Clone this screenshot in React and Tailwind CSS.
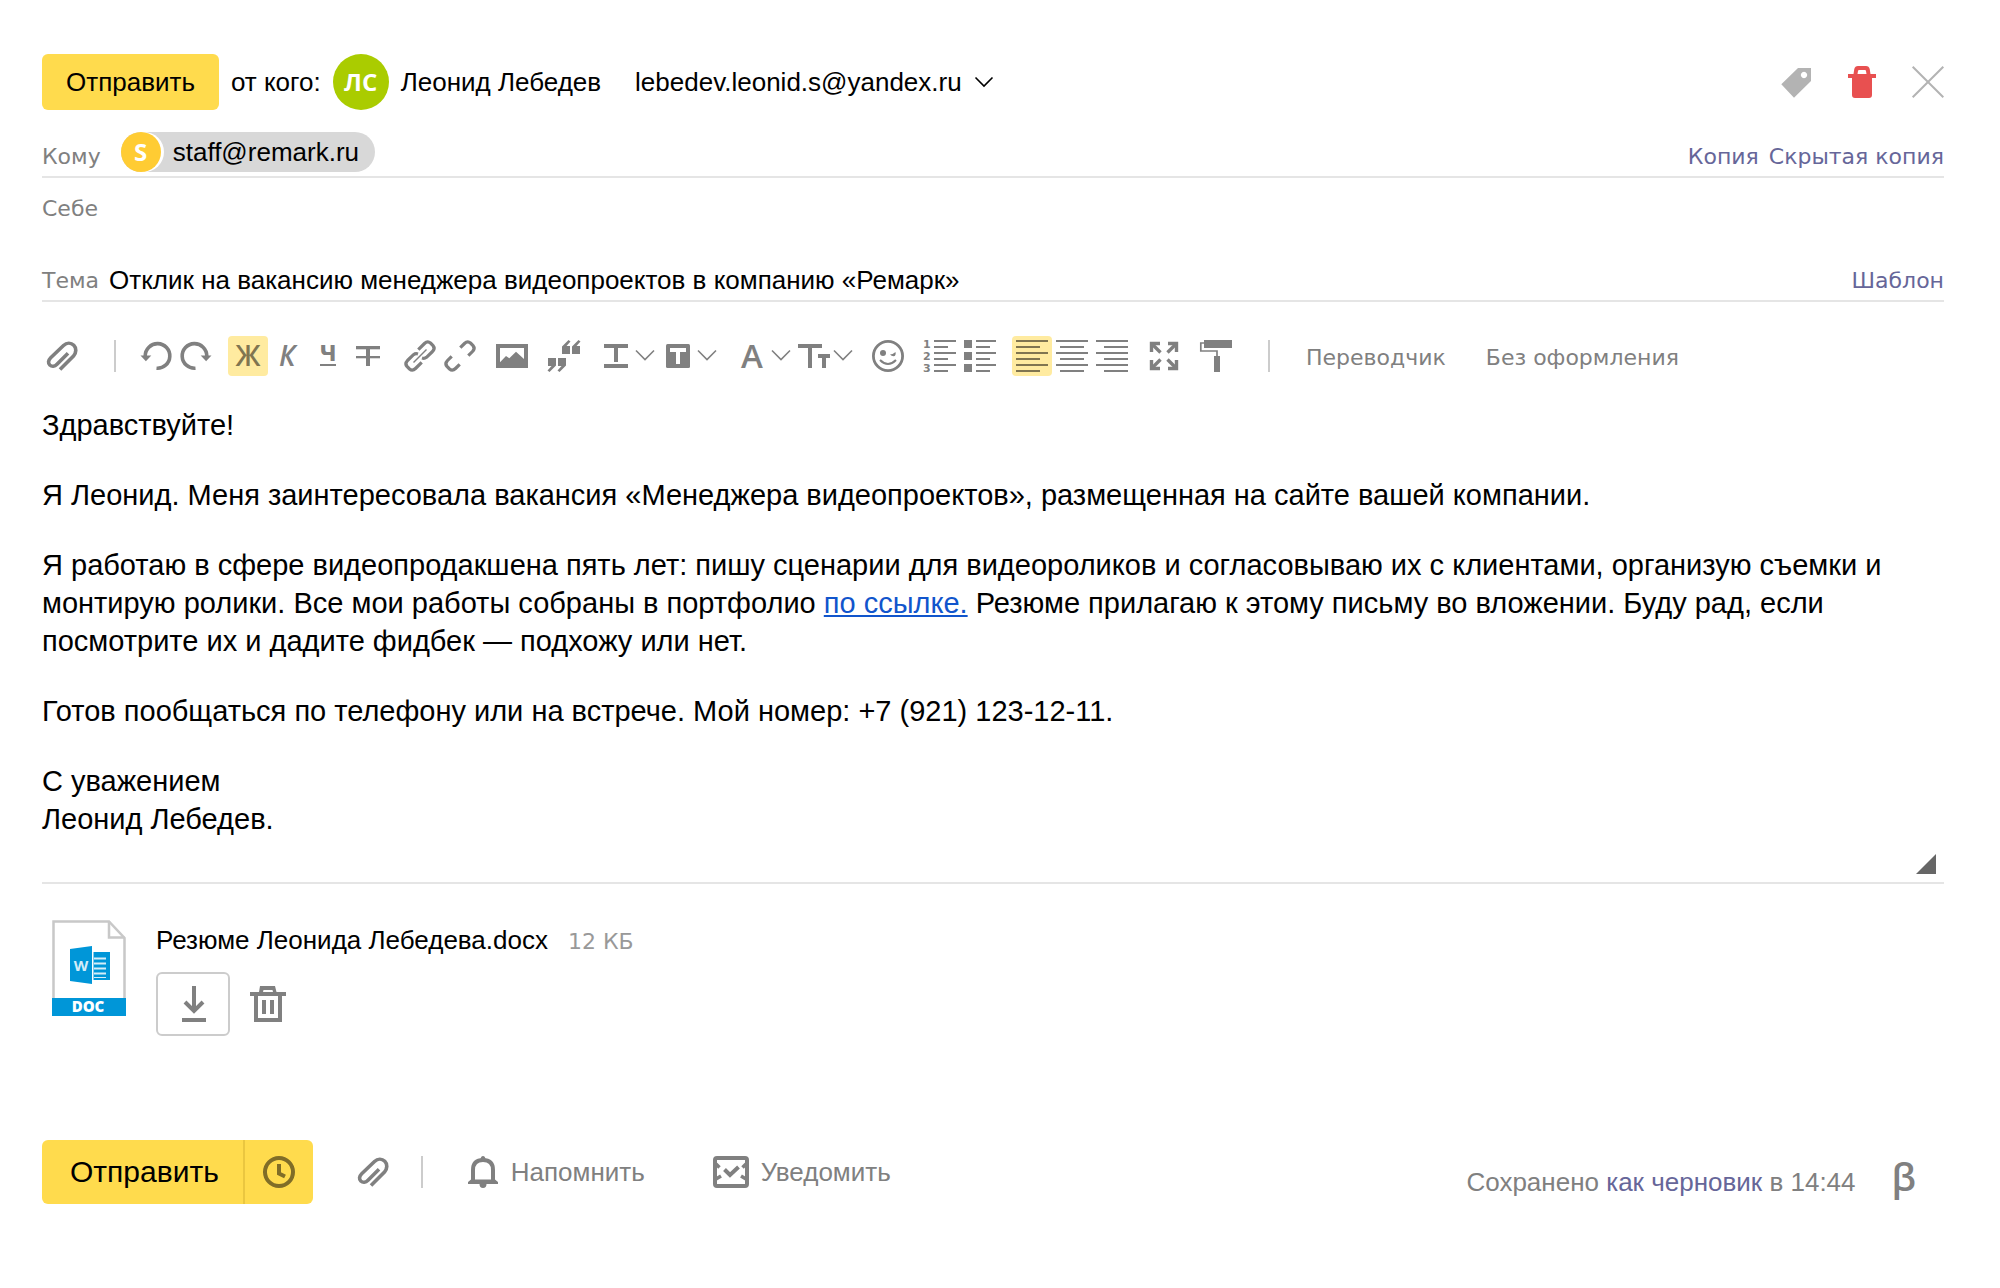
import React, { useState } from 'react';

const TOOLBAR_COLOR = 'text-[#808080]';

const Icon = ({ width = 40, height = 40, className = '', children }) => (
  <svg
    width={width}
    height={height}
    viewBox={`0 0 ${width} ${height}`}
    fill="currentColor"
    className={`shrink-0 overflow-visible ${className}`}
    aria-hidden="true"
  >
    {children}
  </svg>
);

const ClipIcon = () => (
  <Icon>
    <path
      d="M18 33.500 31.500 20C34.500 16.500 34.500 12 31.800 9.300 29 6.500 24.700 6.500 21.500 9.500L8.700 21.800C6 24.500 6 27.200 7.800 29 9.800 30.900 12.700 30.700 15 28.300L26 17.300"
      fill="none"
      stroke="currentColor"
      strokeWidth="3.600"
    />
  </Icon>
);

const UndoShape = () => (
  <>
    <path d="M20.500 32.200A12.300 12.300 0 1 0 9.200 20" fill="none" stroke="currentColor" strokeWidth="3.600" />
    <path d="M4.500 19.500H15.300L9.900 25.200z" />
  </>
);

const Chevron = () => (
  <path d="M40 14.500 49 23.500 58 14.500" fill="none" stroke="currentColor" strokeWidth="1.600" />
);

const LINES = [4, 10, 16, 22, 28, 34];

const Lines = ({ long, short }) =>
  LINES.map((y, i) => {
    const [x1, x2] = i % 2 ? short : long;
    return <rect key={y} x={x1} y={y} width={x2 - x1} height="2" />;
  });

const QuoteMark = () => (
  <>
    <path d="M18 18V10.500L24.500 4 26.500 5.500 22.500 10H26V18z" />
    <path d="M28 18V10.500L34.500 4 36.500 5.500 32.500 10H36V18z" />
  </>
);

const LinkHalf = () => (
  <path d="M18.300 13.700 24.500 7.500Q27.500 4.600 30.500 7L33 9.500Q35.400 12.500 32.500 15.500L26.500 21.300Q24.500 22.800 22 22" />
);

const UnlinkHalf = () => (
  <path d="M20.300 11.700 24.500 7.500Q27.500 4.600 30.500 7L33 9.500Q35.400 12.500 32.500 15.500L28.300 19.700" />
);

const ExpandCorner = () => (
  <>
    <path d="M7.500 16V7.500H16" />
    <path d="M8 8 16.500 16.500" />
  </>
);

const TOOL_GROUPS = [
  [
    { id: 'undo', label: 'Отменить', icon: <UndoShape /> },
    { id: 'redo', label: 'Повторить', icon: <g transform="matrix(-1 0 0 1 40 0)"><UndoShape /></g> },
  ],
  [
    {
      id: 'bold',
      label: 'Полужирный',
      icon: <text x="20" y="30" textAnchor="middle" className="font-['Open_Sans'] text-[28px] font-semibold">Ж</text>,
    },
    {
      id: 'italic',
      label: 'Курсив',
      icon: <text x="19" y="30" textAnchor="middle" className="font-['Open_Sans'] text-[28px] font-semibold italic">К</text>,
    },
    {
      id: 'underline',
      label: 'Подчёркнутый',
      icon: (
        <>
          <text x="20" y="25" textAnchor="middle" className="font-['DejaVu_Sans'] text-[21px] font-bold">Ч</text>
          <rect x="12" y="28" width="16" height="2" />
        </>
      ),
    },
    {
      id: 'strike',
      label: 'Зачёркнутый',
      icon: (
        <>
          <rect x="8" y="10" width="24" height="3.300" />
          <rect x="8" y="20" width="24" height="2.300" />
          <rect x="18" y="10" width="4" height="20" />
        </>
      ),
    },
  ],
  [
    {
      id: 'link',
      label: 'Добавить ссылку',
      icon: (
        <g fill="none" stroke="currentColor" strokeWidth="3.200">
          <LinkHalf />
          <g transform="rotate(180 20 20)"><LinkHalf /></g>
          <path d="M13.500 26.500 26.500 13.500" strokeWidth="1.400" />
        </g>
      ),
    },
    {
      id: 'unlink',
      label: 'Удалить ссылку',
      icon: (
        <g fill="none" stroke="currentColor" strokeWidth="3.200">
          <UnlinkHalf />
          <g transform="rotate(180 20 20)"><UnlinkHalf /></g>
        </g>
      ),
    },
  ],
  [
    {
      id: 'image',
      label: 'Вставить картинку',
      icon: <path fillRule="evenodd" d="M4 8H36V32H4zM8 12V26.300L14 20 17.300 22.300 24 15.700 32 23V12z" />,
    },
  ],
  [
    {
      id: 'quote',
      label: 'Цитата',
      icon: (
        <>
          <QuoteMark />
          <g transform="rotate(180 20 20)"><QuoteMark /></g>
        </>
      ),
    },
  ],
  [
    {
      id: 'color',
      label: 'Цвет текста',
      menu: true,
      icon: (
        <>
          <rect x="8" y="8" width="24" height="4" />
          <rect x="18" y="12" width="4" height="14" />
          <rect x="8" y="28" width="24" height="4" />
        </>
      ),
    },
    {
      id: 'background',
      label: 'Цвет фона',
      menu: true,
      icon: (
        <>
          <rect x="8" y="8" width="24" height="24" rx="1.500" />
          <path d="M12 12H28V16H22V28H18V16H12z" fill="#fff" />
        </>
      ),
    },
  ],
  [
    {
      id: 'font',
      label: 'Шрифт',
      menu: true,
      icon: <text x="20" y="32" textAnchor="middle" className="font-['Open_Sans'] text-[33px] font-semibold">A</text>,
    },
    {
      id: 'size',
      label: 'Размер шрифта',
      menu: true,
      icon: (
        <>
          <path d="M4 8H28V12H18V32H14V12H4z" />
          <path d="M24 18H36V22H32V32H28V22H24z" />
        </>
      ),
    },
  ],
  [
    {
      id: 'smile',
      label: 'Смайлики',
      icon: (
        <>
          <circle cx="20" cy="20" r="14.600" fill="none" stroke="currentColor" strokeWidth="2.800" />
          <circle cx="15" cy="17" r="3" />
          <path d="M22 18.500Q24.500 18.500 27.500 16 28.300 20 25.500 20.300 23.500 20.300 22 18.500z" />
          <path d="M12 24Q20 32 28 24" fill="none" stroke="currentColor" strokeWidth="2" />
        </>
      ),
    },
  ],
  [
    {
      id: 'ol',
      label: 'Нумерованный список',
      icon: (
        <>
          <g className="font-['DejaVu_Sans'] text-[11px] font-bold">
            <text x="3" y="12">1</text>
            <text x="3" y="24">2</text>
            <text x="3" y="36">3</text>
          </g>
          <Lines long={[14, 36]} short={[14, 28]} />
        </>
      ),
    },
    {
      id: 'ul',
      label: 'Список',
      icon: (
        <>
          <rect x="4" y="4" width="8" height="8" />
          <rect x="4" y="16" width="8" height="8" />
          <rect x="4" y="28" width="8" height="8" />
          <Lines long={[16, 36]} short={[16, 30]} />
        </>
      ),
    },
  ],
  [
    { id: 'left', label: 'По левому краю', icon: <Lines long={[4, 36]} short={[4, 28]} /> },
    { id: 'center', label: 'По центру', icon: <Lines long={[4, 36]} short={[8, 32]} /> },
    { id: 'right', label: 'По правому краю', icon: <Lines long={[4, 36]} short={[12, 36]} /> },
  ],
  [
    {
      id: 'expand',
      label: 'Развернуть',
      icon: (
        <g fill="none" stroke="currentColor" strokeWidth="3.400">
          <ExpandCorner />
          <g transform="rotate(90 20 20)"><ExpandCorner /></g>
          <g transform="rotate(180 20 20)"><ExpandCorner /></g>
          <g transform="rotate(270 20 20)"><ExpandCorner /></g>
        </g>
      ),
    },
  ],
  [
    {
      id: 'theme',
      label: 'Оформление письма',
      icon: (
        <>
          <rect x="8" y="4" width="28" height="8" />
          <path d="M8 7H4.800V15H21V20" fill="none" stroke="currentColor" strokeWidth="1.700" />
          <rect x="18" y="20" width="6" height="16" />
        </>
      ),
    },
  ],
];

const Separator = () => <span className="h-8 w-[2px] shrink-0 bg-[#ccc]" />;

const Toolbar = () => {
  const [active, setActive] = useState(['bold', 'left']);

  const toggle = (id) =>
    setActive((prev) => (prev.includes(id) ? prev.filter((x) => x !== id) : [...prev, id]));

  return (
    <div role="toolbar" aria-label="Форматирование" className={`mt-[34px] flex h-10 items-center ${TOOLBAR_COLOR}`}>
      <button type="button" aria-label="Прикрепить файл" className="mr-8">
        <ClipIcon />
      </button>
      <Separator />
      <div className="ml-5 mr-8 flex gap-3">
        {TOOL_GROUPS.map((group) => (
          <div key={group[0].id} className="flex">
            {group.map((tool) => (
              <button
                key={tool.id}
                type="button"
                aria-label={tool.label}
                aria-haspopup={tool.menu ? 'menu' : undefined}
                onClick={() => toggle(tool.id)}
                className={active.includes(tool.id) ? 'rounded bg-[#ffeba0] text-[#807550]' : ''}
              >
                <Icon width={tool.menu ? 62 : 40}>
                  {tool.icon}
                  {tool.menu && <Chevron />}
                </Icon>
              </button>
            ))}
          </div>
        ))}
      </div>
      <Separator />
      <div className="ml-9 flex gap-10 whitespace-nowrap pt-1 font-['DejaVu_Sans',sans-serif] text-[22px] leading-8">
        <button type="button">Переводчик</button>
        <button type="button">Без оформления</button>
      </div>
    </div>
  );
};

const Header = () => (
  <header className="flex h-14 items-center text-[26px] leading-8">
    <button type="submit" className="h-14 rounded-md bg-[#ffdb4d] px-6">Отправить</button>
    <span className="ml-3">от кого:</span>
    <span className="ml-3 flex size-14 items-center justify-center rounded-full bg-[#aacc00] font-['Open_Sans',sans-serif] text-[24px] font-bold text-white">
      ЛС
    </span>
    <span className="ml-3">Леонид Лебедев</span>
    <label className="ml-[34px] flex items-center">
      <select aria-label="Адрес отправителя" className="appearance-none bg-transparent leading-8">
        <option>lebedev.leonid.s@yandex.ru</option>
      </select>
      <Icon width={20} height={12} className="ml-3">
        <path d="M1.500 1.500 10 10 18.500 1.500" fill="none" stroke="currentColor" strokeWidth="1.600" />
      </Icon>
    </label>
    <div className="ml-auto flex gap-[34px] text-[#b3b3b3]">
      <button type="button" aria-label="Метки">
        <Icon width={32} height={32}>
          <path fillRule="evenodd" d="M1.300 18.300 18 2H31V15L14 31.700zM24 5.800a3.200 3.200 0 1 0 .01 0z" />
        </Icon>
      </button>
      <button type="button" aria-label="Удалить письмо" className="text-[#e85050]">
        <Icon width={32} height={32}>
          <path d="M2 8H7.500L8.300 3Q9 0 12 0H20Q23 0 23.700 3L24.500 8H30V12H26V29Q26 32 23 32H9Q6 32 6 29V12H2zM11.500 8H20.500L20 5Q19.800 4 19 4H13Q12.200 4 12 5z" fillRule="evenodd" />
        </Icon>
      </button>
      <button type="button" aria-label="Закрыть">
        <Icon width={32} height={32}>
          <path d="M.7.7 31.300 31.300M31.300.7.7 31.300" stroke="currentColor" strokeWidth="2" />
        </Icon>
      </button>
    </div>
  </header>
);

const fieldLabel = "font-['DejaVu_Sans',sans-serif] text-[22px] leading-[30px] text-[#808080]";
const fieldLink = "font-['DejaVu_Sans',sans-serif] text-[22px] leading-[30px] text-[#669] whitespace-nowrap";

const Fields = () => (
  <>
    <div className="mt-[22px] flex items-end border-b-2 border-[#e5e5e5] pb-1">
      <label htmlFor="to" className={fieldLabel}>Кому</label>
      <span className="ml-5 flex h-10 items-center rounded-full bg-[#d8d8d8] pr-4 text-[26px] leading-8">
        <span className="flex size-10 items-center justify-center rounded-full bg-[#ffcc33] font-['Open_Sans',sans-serif] text-[24px] font-bold text-white shadow-[3px_0_0_#fff]">
          S
        </span>
        <span className="ml-3">staff@remark.ru</span>
      </span>
      <input id="to" type="text" className="h-8 min-w-0 flex-1 px-2 text-[26px] outline-none" />
      <div className="flex gap-[10px]">
        <a href="#cc" className={fieldLink}>Копия</a>
        <a href="#bcc" className={fieldLink}>Скрытая копия</a>
      </div>
    </div>
    <button type="button" className={`mt-4 block ${fieldLabel}`}>Себе</button>
    <div className="mt-10 flex items-end border-b-2 border-[#e5e5e5] pb-1">
      <label htmlFor="subject" className={fieldLabel}>Тема</label>
      <input
        id="subject"
        type="text"
        defaultValue="Отклик на вакансию менеджера видеопроектов в компанию «Ремарк»"
        className="ml-[10px] h-8 min-w-0 flex-1 text-[26px] leading-8 outline-none"
      />
      <a href="#template" className={fieldLink}>Шаблон</a>
    </div>
  </>
);

const MessageBody = () => (
  <div className="relative mt-[30px] border-b-2 border-[#e5e5e5] pb-11">
    <div
      role="textbox"
      aria-multiline="true"
      aria-label="Текст письма"
      contentEditable
      suppressContentEditableWarning
      className="space-y-8 text-[29px] leading-[38px] outline-none"
    >
      <p>Здравствуйте!</p>
      <p>Я Леонид. Меня заинтересовала вакансия «Менеджера видеопроектов», размещенная на сайте вашей компании.</p>
      <p>
        Я работаю в сфере видеопродакшена пять лет: пишу сценарии для видеороликов и согласовываю их с клиентами,
        организую съемки и монтирую ролики. Все мои работы собраны в портфолио{' '}
        <a href="#portfolio" className="text-[#1155cc] underline">по ссылке.</a> Резюме прилагаю к этому письму во
        вложении. Буду рад, если посмотрите их и дадите фидбек — подхожу или нет.
      </p>
      <p>Готов пообщаться по телефону или на встрече. Мой номер: +7 (921) 123-12-11.</p>
      <p>
        С уважением
        <br />
        Леонид Лебедев.
      </p>
    </div>
    <Icon width={20} height={20} className="absolute bottom-2 right-2 text-[#666]">
      <path d="M20 0V20H0z" />
    </Icon>
  </div>
);

const Attachment = () => (
  <div className="mt-9 flex items-start pl-[10px]">
    <Icon width={74} height={96}>
      <path d="M1.500 78V1.500H57L72.500 18V78" fill="#fff" stroke="#c8c8c8" strokeWidth="2.500" />
      <path d="M57 1.500V17.500H72.500" fill="none" stroke="#c8c8c8" strokeWidth="2.500" />
      <rect y="78" width="74" height="18" fill="#0096d8" />
      <path d="M18 29 40 26V64L18 61z" fill="#0096d8" />
      <rect x="41.500" y="32" width="16.500" height="28" fill="#0096d8" />
      <path d="M42 38.500H54M42 43.500H54M42 48.500H54M42 53.500H54" stroke="#d5edf8" strokeWidth="2" />
      <path d="M42 57.500H54" stroke="#d5edf8" strokeWidth="1" />
      <text x="29" y="51" textAnchor="middle" fill="#d5edf8" className="font-['Open_Sans'] text-[15px] font-bold">W</text>
      <text x="36" y="92" textAnchor="middle" fill="#fff" className="font-['Open_Sans'] text-[15px] font-extrabold">DOC</text>
    </Icon>
    <div className="ml-[30px]">
      <div className="flex items-baseline gap-5">
        <span className="text-[26px] leading-10">Резюме Леонида Лебедева.docx</span>
        <span className="font-['DejaVu_Sans',sans-serif] text-[22px] leading-8 text-[#999]">12 КБ</span>
      </div>
      <div className={`mt-3 flex items-center ${TOOLBAR_COLOR}`}>
        <button
          type="button"
          aria-label="Скачать"
          className="flex h-16 w-[74px] items-center justify-center rounded-md border-2 border-[#ccc]"
        >
          <Icon>
            <path d="M21 2V27M12 18 21 27 30 18" fill="none" stroke="currentColor" strokeWidth="4" />
            <rect x="9" y="34" width="24" height="4" />
          </Icon>
        </button>
        <button type="button" aria-label="Удалить вложение" className="ml-[18px]">
          <Icon>
            <path d="M2 8H11L12 2H27L28.500 8H38V12H34V38H6V12H2zM15 8H25L24.500 6H15.500zM10 12V34H30V12z" fillRule="evenodd" />
            <rect x="14" y="16" width="4" height="14" />
            <rect x="22" y="16" width="4" height="14" />
          </Icon>
        </button>
      </div>
    </div>
  </div>
);

const Footer = () => (
  <footer className="mt-[104px] flex h-16 items-center text-[26px] leading-8 text-[#808080]">
    <div className="flex h-16 overflow-hidden rounded-md bg-[#ffdb4d] text-black">
      <button type="submit" className="pl-7 pr-6 text-[30px]">Отправить</button>
      <button
        type="button"
        aria-label="Отправить позже"
        className="flex items-center border-l-2 border-[#eac640] px-[18px] text-[#806d27]"
      >
        <Icon width={32} height={32}>
          <circle cx="16" cy="16" r="14" fill="none" stroke="currentColor" strokeWidth="4" />
          <path d="M16 8V17.500L22 20.500" fill="none" stroke="currentColor" strokeWidth="4" />
        </Icon>
      </button>
    </div>
    <button type="button" aria-label="Прикрепить файл" className="ml-10 mr-7">
      <ClipIcon />
    </button>
    <Separator />
    <button type="button" className="ml-11 flex items-center gap-3">
      <Icon width={32} height={32}>
        <path d="M6 26V14Q6 4 16 4T26 14V26" fill="none" stroke="currentColor" strokeWidth="4" />
        <path d="M13.500 3Q14 0 16 0T18.500 3zM1 28V26L4 23.500H28L31 26V28H19.500Q19.500 32 16 32T12.500 28z" />
      </Icon>
      Напомнить
    </button>
    <button type="button" className="ml-[68px] flex items-center gap-3">
      <Icon width={36} height={32}>
        <rect x="2" y="2" width="32" height="28" rx="2" fill="none" stroke="currentColor" strokeWidth="4" />
        <path d="M11.500 13.500 17 19 25.500 11" fill="none" stroke="currentColor" strokeWidth="4" />
        <path d="M3 8 6.500 11.500M33 8 29.500 11.500M3 23 8 20M33 23 28 20" stroke="currentColor" strokeWidth="3.500" />
      </Icon>
      Уведомить
    </button>
    <div className="ml-auto flex items-center gap-9 pr-7 pt-5">
      <p>
        Сохранено <a href="#drafts" className="text-[#669]">как черновик</a> в 14:44
      </p>
      <span className="pb-3 font-['Open_Sans',sans-serif] text-[38px] font-semibold leading-8">β</span>
    </div>
  </footer>
);

const App = () => (
  <div className="min-h-screen bg-white font-['Liberation_Sans',Arial,sans-serif] text-black">
    <form className="pb-20 pl-[42px] pr-14 pt-[54px]" onSubmit={(e) => e.preventDefault()}>
      <Header />
      <Fields />
      <Toolbar />
      <MessageBody />
      <Attachment />
      <Footer />
    </form>
  </div>
);

export default App;
